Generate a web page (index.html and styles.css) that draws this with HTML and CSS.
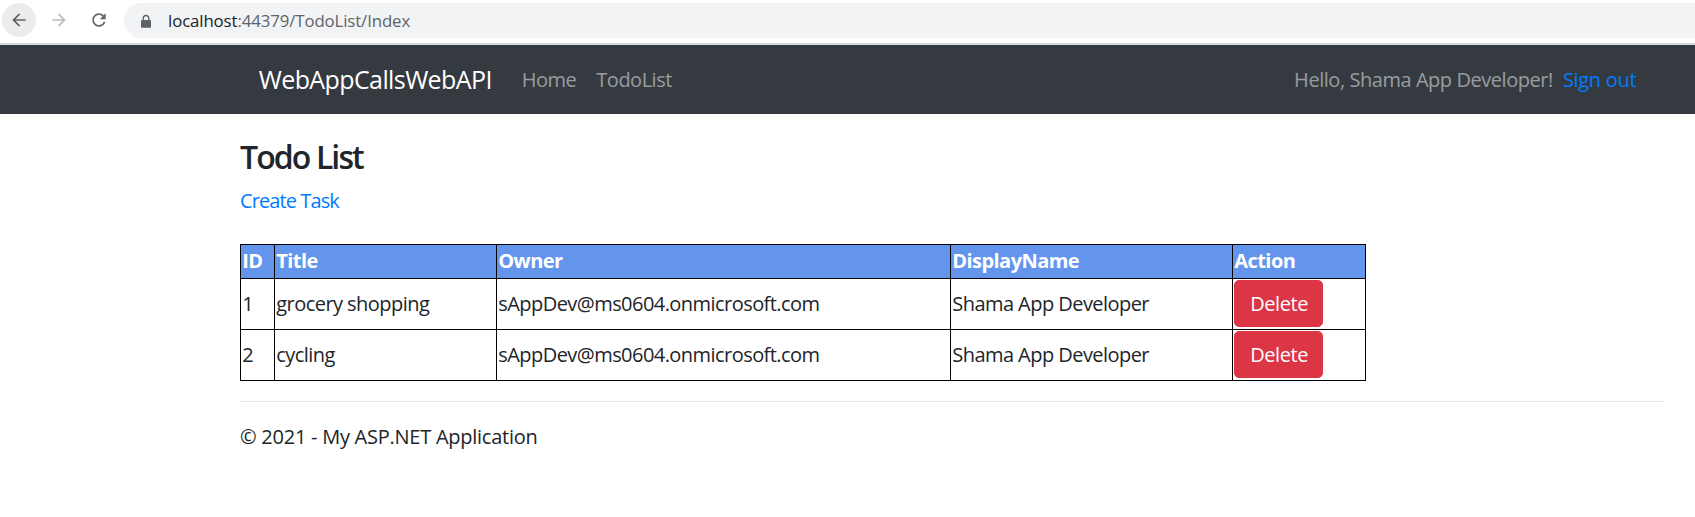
FILE: index.html
```html
<!DOCTYPE html>
<html lang="en">
<head>
<meta charset="utf-8">
<title>Todo List - WebAppCallsWebAPI</title>
<link rel="stylesheet" href="styles.css">
</head>
<body>
<div class="chrome">
  <div class="nav-btn back">
    <svg width="20" height="20" viewBox="0 0 24 24"><path fill="#5f6368" d="M20 11H7.83l5.59-5.59L12 4l-8 8 8 8 1.41-1.41L7.83 13H20v-2z"/></svg>
  </div>
  <div class="nav-btn fwd">
    <svg width="20" height="20" viewBox="0 0 24 24"><path fill="#babcbe" d="M4 11h12.17l-5.59-5.59L12 4l8 8-8 8-1.41-1.41L16.17 13H4v-2z"/></svg>
  </div>
  <div class="nav-btn reload">
    <svg width="20" height="20" viewBox="0 0 24 24"><path fill="#5f6368" d="M17.65 6.35C16.2 4.9 14.21 4 12 4c-4.42 0-7.99 3.58-7.99 8s3.57 8 7.990 8c3.73 0 6.84-2.55 7.73-6h-2.08c-.82 2.33-3.04 4-5.65 4-3.31 0-6-2.69-6-6s2.69-6 6-6c1.66 0 3.14.69 4.22 1.78L13 11h7V4l-2.35 2.35z"/></svg>
  </div>
  <div class="omnibox">
    <svg class="lock" width="12" height="14" viewBox="0 0 12 14"><path fill="#5f6368" d="M2.5 6V4.3C2.5 2.2 4 .8 6 .8s3.5 1.4 3.5 3.5V6h.6c.5 0 .9.4.9.9v5.9c0 .5-.4.9-.9.9H1.9c-.5 0-.9-.4-.9-.9V6.9c0-.5.4-.9.9-.9h.6zm1.4 0h4.2V4.3C8.1 3 7.2 2.2 6 2.2S3.9 3 3.9 4.3V6z"/></svg>
    <span class="host">localhost</span><span class="path">:44379/TodoList/Index</span>
  </div>
</div>

<header class="navbar">
  <div class="nav-inner">
    <a class="brand">WebAppCallsWebAPI</a>
    <a class="nav-link">Home</a>
    <a class="nav-link">TodoList</a>
    <div class="spacer"></div>
    <span class="nav-text">Hello, Shama App Developer!</span>
    <a class="nav-link signout">Sign out</a>
  </div>
</header>

<main class="container">
  <h3 class="title">Todo List</h3>
  <p class="create"><a class="link">Create Task</a></p>
  <table class="todo">
    <colgroup>
      <col class="c-id"><col class="c-title"><col class="c-owner"><col class="c-name"><col class="c-action">
    </colgroup>
    <thead>
      <tr><th>ID</th><th>Title</th><th>Owner</th><th>DisplayName</th><th>Action</th></tr>
    </thead>
    <tbody>
      <tr><td>1</td><td>grocery shopping</td><td>sAppDev@ms0604.onmicrosoft.com</td><td>Shama App Developer</td><td><button class="btn-danger">Delete</button></td></tr>
      <tr><td>2</td><td>cycling</td><td>sAppDev@ms0604.onmicrosoft.com</td><td>Shama App Developer</td><td><button class="btn-danger">Delete</button></td></tr>
    </tbody>
  </table>
</main>

<footer class="footer">
  <div class="footer-text">© 2021 - My ASP.NET Application</div>
</footer>
</body>
</html>
```

FILE: styles.css
```css
* { box-sizing: border-box; }
html, body { margin: 0; padding: 0; }
body {
  font-family: "Open Sans", "Noto Sans", sans-serif;
  color: #212529;
  background: #fff;
  font-size: 20px;
  line-height: 1.5;
}

/* browser chrome */
.chrome {
  height: 45px;
  display: flex;
  align-items: flex-start;
  padding-top: 3px;
  background: #fff;
  border-bottom: 2px solid #d9d9db;
  overflow: hidden;
}
.nav-btn {
  width: 34px;
  height: 34px;
  border-radius: 50%;
  display: flex;
  align-items: center;
  justify-content: center;
  flex: none;
}
.back { margin-left: 2px; background: #ececed; }
.fwd { margin-left: 6px; }
.reload { margin-left: 6px; }
.omnibox {
  margin-left: 8px;
  flex: 1 0 auto;
  height: 35px;
  border-radius: 18px 0 0 18px;
  background: #f1f3f4;
  display: flex;
  align-items: center;
  padding-left: 16px;
  font-family: "Open Sans", sans-serif;
  font-size: 16.8px;
  letter-spacing: -0.1px;
}
.lock { margin-right: 16px; }
.host { color: #202124; }
.path { color: #5f6368; }

/* navbar */
.navbar {
  background: #343a40;
  height: 69px;
}
.nav-inner {
  margin-left: 240px;
  width: 1425px;
  height: 69px;
  padding: 10px 18.75px;
  display: flex;
  align-items: center;
}
.brand {
  color: #fff;
  font-size: 25px;
  line-height: 37.5px;
  padding: 6.25px 0;
  margin-right: 20px;
  letter-spacing: -0.6px;
}
.nav-link {
  color: rgba(255,255,255,.5);
  padding: 10px;
  letter-spacing: -0.5px;
}
.spacer { flex: 1; }
.nav-text {
  color: rgba(255,255,255,.5);
  letter-spacing: -0.45px;
}
.signout { color: #007bff; padding-right: 10px; letter-spacing: -0.3px; }

/* main */
.container {
  margin-left: 240px;
  width: 1425px;
  padding-top: 20px;
  padding-bottom: 20px;
}
.title {
  font-size: 32px;
  font-weight: 600;
  line-height: 42px;
  padding-top: 2px;
  margin: 0 0 8px;
  letter-spacing: -1.9px;
}
.create { margin: 0 0 28px; letter-spacing: -0.9px; }
.link { color: #007bff; }

.todo {
  border-collapse: collapse;
  table-layout: fixed;
  width: 1125px;
  letter-spacing: -0.55px;
}
.c-id { width: 34px; }
.c-title { width: 222px; }
.c-owner { width: 454px; }
.c-name { width: 282px; }
.c-action { width: 133px; }
.todo th, .todo td {
  border: 1.25px solid #000;
  padding: 1.25px;
  text-align: left;
  white-space: nowrap;
  overflow: hidden;
}
.todo th {
  background: #6495ed;
  color: #fff;
  font-weight: 700;
  line-height: 30px;
}
.todo td { height: 51px; }
.btn-danger {
  display: block;
  font-family: inherit;
  font-size: 20px;
  line-height: 30px;
  letter-spacing: -0.45px;
  color: #fff;
  background: #dc3545;
  border: 1.25px solid #dc3545;
  border-radius: 5px;
  padding: 7.5px 15px;
  width: 89px;
  text-align: center;
}

/* footer */
.footer {
  margin-left: 240px;
  width: 1425px;
  border-top: 1.25px solid #e5e5e5;
  padding-top: 20px;
}
.footer-text { letter-spacing: -0.25px; }
```
